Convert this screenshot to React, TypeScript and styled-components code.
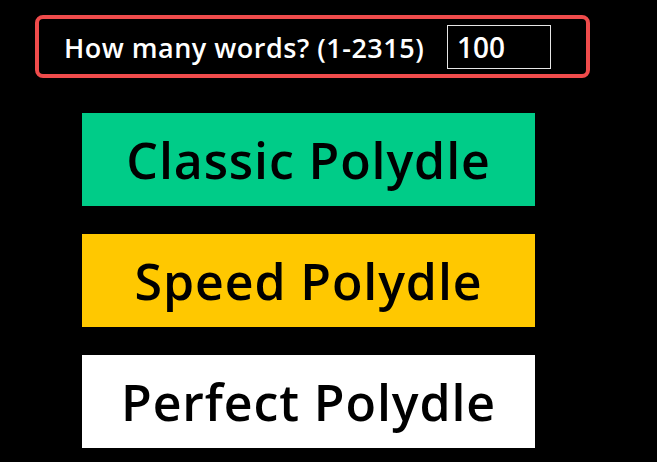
import React from "react";
import styled, { createGlobalStyle } from "styled-components";

const Global = createGlobalStyle`
  html, body {
    margin: 0;
    padding: 0;
    background: #000;
  }
  body {
    font-family: "Open Sans", "Noto Sans", sans-serif;
    color: #fff;
  }
`;

const Page = styled.div`
  min-height: 462px;
  padding: 15px 0 0 35px;
  box-sizing: border-box;
  background: #000;
`;

const WordsForm = styled.form`
  box-sizing: border-box;
  width: 555px;
  height: 63px;
  border: 4px solid #ef4b4b;
  border-radius: 8px;
  display: flex;
  align-items: center;
  justify-content: space-between;
  padding: 1px 35px 0 25px;
`;

const Label = styled.label`
  font-size: 27px;
  font-weight: 600;
  letter-spacing: 0.5px;
  color: #fff;
  white-space: nowrap;
`;

const CountInput = styled.input`
  box-sizing: border-box;
  width: 104px;
  height: 44px;
  background: #000;
  color: #fff;
  border: 1px solid #e6e6e6;
  border-radius: 0;
  padding: 0 9px;
  font-family: inherit;
  font-size: 28px;
  font-weight: 600;
  outline: none;
`;

const Modes = styled.div`
  display: flex;
  flex-direction: column;
  gap: 28px;
  margin: 35px 0 0 47px;
  width: 453px;
`;

const ModeButton = styled.button<{ $bg: string }>`
  box-sizing: border-box;
  height: 93px;
  width: 100%;
  border: none;
  background: ${(p) => p.$bg};
  color: #000;
  font-family: inherit;
  font-size: 50px;
  font-weight: 600;
  letter-spacing: 0.9px;
  display: flex;
  align-items: center;
  justify-content: center;
  padding: 0;
  cursor: pointer;
`;

export default function App() {
  return (
    <>
      <Global />
      <Page>
        <WordsForm onSubmit={(e) => e.preventDefault()}>
          <Label htmlFor="count">How many words? (1-2315)</Label>
          <CountInput id="count" type="text" defaultValue="100" />
        </WordsForm>
        <Modes>
          <ModeButton $bg="#00cc88">Classic Polydle</ModeButton>
          <ModeButton $bg="#ffc800">Speed Polydle</ModeButton>
          <ModeButton $bg="#ffffff">Perfect Polydle</ModeButton>
        </Modes>
      </Page>
    </>
  );
}
